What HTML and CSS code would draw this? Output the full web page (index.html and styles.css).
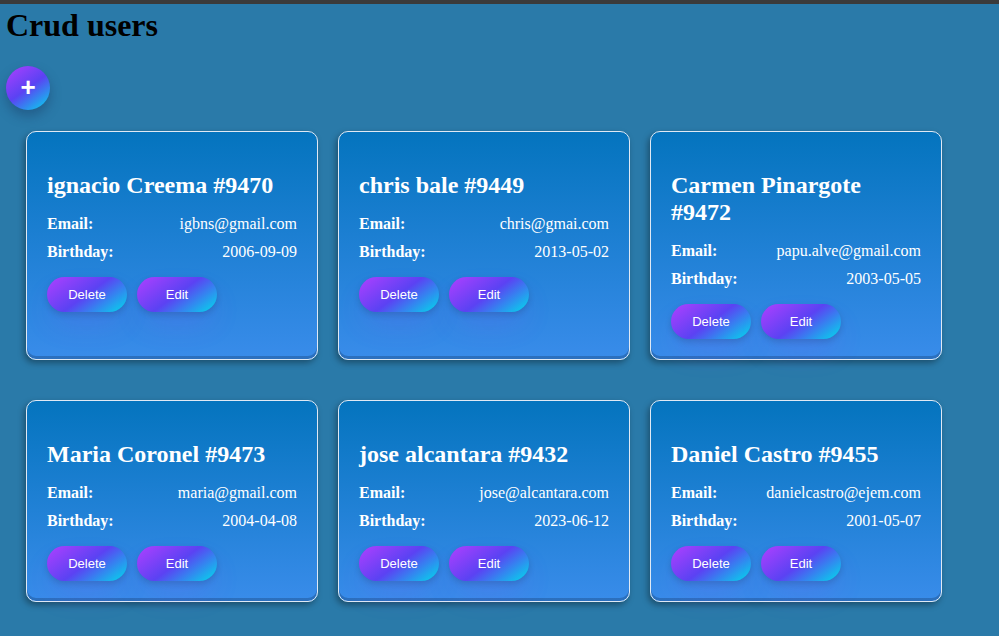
FILE: index.html
```html
<!DOCTYPE html>
<html>
<head>
<meta charset="utf-8">
<link rel="stylesheet" href="styles.css">
</head>
<body>
<div class="topbar"></div>
<h1 class="title">Crud users</h1>
<button class="add-btn">+</button>
<div class="grid">
  <div class="card">
    <h2 class="name">ignacio Creema #9470</h2>
    <div class="row"><b>Email:</b><span>igbns@gmail.com</span></div>
    <div class="row"><b>Birthday:</b><span>2006-09-09</span></div>
    <div class="actions"><button class="btn">Delete</button><button class="btn">Edit</button></div>
  </div>
  <div class="card">
    <h2 class="name">chris bale #9449</h2>
    <div class="row"><b>Email:</b><span>chris@gmai.com</span></div>
    <div class="row"><b>Birthday:</b><span>2013-05-02</span></div>
    <div class="actions"><button class="btn">Delete</button><button class="btn">Edit</button></div>
  </div>
  <div class="card">
    <h2 class="name">Carmen Pinargote #9472</h2>
    <div class="row"><b>Email:</b><span>papu.alve@gmail.com</span></div>
    <div class="row"><b>Birthday:</b><span>2003-05-05</span></div>
    <div class="actions"><button class="btn">Delete</button><button class="btn">Edit</button></div>
  </div>
  <div class="card">
    <h2 class="name">Maria Coronel #9473</h2>
    <div class="row"><b>Email:</b><span>maria@gmail.com</span></div>
    <div class="row"><b>Birthday:</b><span>2004-04-08</span></div>
    <div class="actions"><button class="btn">Delete</button><button class="btn">Edit</button></div>
  </div>
  <div class="card">
    <h2 class="name">jose alcantara #9432</h2>
    <div class="row"><b>Email:</b><span>jose@alcantara.com</span></div>
    <div class="row"><b>Birthday:</b><span>2023-06-12</span></div>
    <div class="actions"><button class="btn">Delete</button><button class="btn">Edit</button></div>
  </div>
  <div class="card">
    <h2 class="name">Daniel Castro #9455</h2>
    <div class="row"><b>Email:</b><span>danielcastro@ejem.com</span></div>
    <div class="row"><b>Birthday:</b><span>2001-05-07</span></div>
    <div class="actions"><button class="btn">Delete</button><button class="btn">Edit</button></div>
  </div>
</div>
</body>
</html>
```
FILE: styles.css
```css
html, body {
  margin: 0;
  padding: 0;
}
body {
  background: #2a7aa9;
  font-family: "Liberation Serif", "Times New Roman", serif;
  color: #000;
  min-height: 636px;
}
.topbar {
  height: 4px;
  background: #3b3b3b;
}
.title {
  margin: 3px 0 0 6px;
  font-size: 32px;
  line-height: 37px;
  font-weight: bold;
}
.add-btn {
  display: flex;
  align-items: center;
  justify-content: center;
  margin: 22px 0 0 6px;
  width: 44px;
  height: 44px;
  border-radius: 50%;
  border: none;
  padding: 0 0 2px 0;
  color: #fff;
  font-family: "Liberation Sans", Arial, sans-serif;
  font-size: 26px;
  font-weight: bold;
  background-image: linear-gradient(144deg, #af40ff, #5b42f3 50%, #00ddeb);
  box-shadow: 0 6px 12px rgba(20, 40, 80, 0.35);
}
.grid {
  display: grid;
  grid-template-columns: repeat(3, 292px);
  column-gap: 20px;
  row-gap: 40px;
  padding: 21px 0 0 26px;
}
.card {
  border: 1px solid #dfe9f5;
  border-radius: 10px;
  padding: 20px;
  color: #fff;
  background: linear-gradient(180deg, #0474be 0%, #398cea 100%);
  box-shadow: inset 0 -3px 0 rgba(20, 60, 110, 0.35), -2px 3px 6px rgba(0, 0, 0, 0.35);
}
.name {
  margin: 20px 0 16px;
  font-size: 24px;
  line-height: 27px;
  font-weight: bold;
}
.row {
  display: flex;
  justify-content: space-between;
  font-size: 16px;
  line-height: 18px;
  margin-bottom: 10px;
}
.actions {
  display: flex;
  gap: 10px;
  margin-top: 16px;
}
.btn {
  width: 80px;
  height: 35px;
  border: none;
  border-radius: 18px;
  color: #fff;
  font-family: "Liberation Sans", Arial, sans-serif;
  font-size: 13px;
  background-image: linear-gradient(144deg, #af40ff, #5b42f3 50%, #00ddeb);
  box-shadow: rgba(151, 65, 252, 0.2) 0 15px 30px -5px, 0 3px 6px rgba(0, 0, 0, 0.15);
}
```
